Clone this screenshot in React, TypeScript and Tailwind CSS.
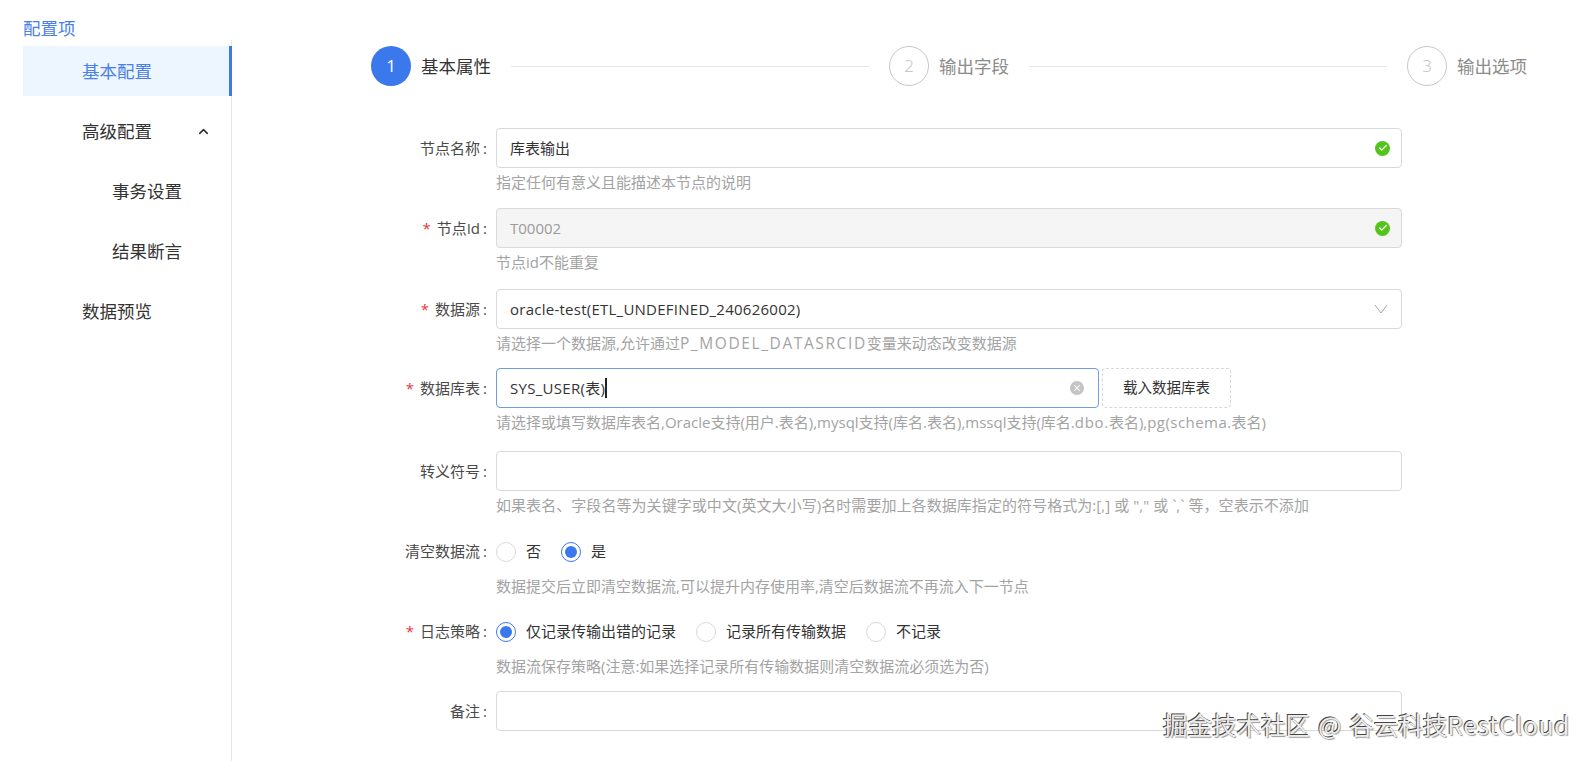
import { Check, ChevronUp, X } from 'lucide-react';

const BLUE = 'bg-[#3b78ec]';

function Step({ num, title, active }: { num: number; title: string; active?: boolean }) {
  return (
    <div className="flex h-10 shrink-0 items-center gap-2.5">
      <div
        className={
          active
            ? `flex h-10 w-10 items-center justify-center rounded-full ${BLUE} text-[17px] text-white`
            : 'flex h-10 w-10 items-center justify-center rounded-full border border-[#c8c8c8] text-[17px] font-light text-[#c0c0c0]'
        }
      >
        {num}
      </div>
      <span className={active ? 'text-[17.5px] text-[#333]' : 'text-[17.5px] text-[#8c8c8c]'}>{title}</span>
    </div>
  );
}

function SuccessIcon() {
  return (
    <span className="flex h-[15px] w-[15px] items-center justify-center rounded-full bg-[#52c41a]">
      <Check size={10} strokeWidth={3} className="text-white" />
    </span>
  );
}

function SelectArrow() {
  return (
    <svg width="14" height="10" viewBox="0 0 14 10" fill="none" className="mr-[2px] text-[#a8a8a8]">
      <path d="M1 1 L7 9 L13 1" stroke="currentColor" strokeWidth="1" />
    </svg>
  );
}

function Row({
  label,
  required,
  hint,
  height = 'h-[80.5px]',
  children,
}: {
  label: string;
  required?: boolean;
  hint: React.ReactNode;
  height?: string;
  children: React.ReactNode;
}) {
  return (
    <div className={`flex ${height}`}>
      <div className="flex h-10 w-[126px] shrink-0 items-center justify-end pr-[9px] text-[15px] text-[#4a4a4a]">
        {required && <span className="mr-[6px] text-[15px] text-[#e4393c]">*</span>}
        {label}
        <span className="ml-[3px]">:</span>
      </div>
      <div className="min-w-0 flex-1">
        {children}
        <div className="mt-[3px] text-[15px] leading-[22px] whitespace-nowrap text-[#a3a3a3]">{hint}</div>
      </div>
    </div>
  );
}

function TextBox({
  value,
  disabled,
  icon,
  wide,
}: {
  value?: string;
  disabled?: boolean;
  icon?: React.ReactNode;
  wide?: boolean;
}) {
  return (
    <div
      className={`flex h-10 items-center justify-between rounded border border-[#d9d9d9] pr-[11px] pl-[13px] text-[15px] ${
        disabled ? 'bg-[#f5f5f5] text-[#9a9a9a]' : 'bg-white text-[#333]'
      }`}
    >
      <span className={wide ? 'tracking-[0.25px]' : ''}>{value}</span>
      {icon}
    </div>
  );
}

function Radio({ label, checked }: { label: string; checked?: boolean }) {
  return (
    <label className="flex items-center gap-2.5 text-[15px] text-[#333]">
      <span
        className={`flex h-5 w-5 items-center justify-center rounded-full border ${
          checked ? 'border-[#3b78ec]' : 'border-[#d9d9d9]'
        }`}
      >
        {checked && <span className={`h-3 w-3 rounded-full ${BLUE}`} />}
      </span>
      {label}
    </label>
  );
}

export default function App() {
  return (
    <div
      className="relative flex h-[761px] w-full overflow-hidden bg-white"
      style={{ fontFamily: '"Open Sans", "Noto Sans CJK SC", sans-serif' }}
    >
      <aside className="w-[232px] shrink-0 pl-[23px]">
        <div className="flex h-10 items-center pt-[16px] text-[17.5px] text-[#4a80e8]">配置项</div>
        <nav className="h-[721px] border-r border-[#e6e6e6] pt-1.5 text-[17.5px] text-[#333]">
          <div className="-mr-px flex h-[50px] items-center border-r-[3px] border-[#3b78ec] bg-[#edf5ff] pl-[59px] text-[#4a80e8]">
            基本配置
          </div>
          <div className="mt-2.5 flex h-[50px] items-center justify-between pr-[20px] pl-[59px]">
            高级配置
            <ChevronUp size={15} strokeWidth={2.5} />
          </div>
          <div className="mt-2.5 flex h-[50px] items-center pl-[89px]">事务设置</div>
          <div className="mt-2.5 flex h-[50px] items-center pl-[89px]">结果断言</div>
          <div className="mt-2.5 flex h-[50px] items-center pl-[59px]">数据预览</div>
        </nav>
      </aside>

      <main className="min-w-0 flex-1">
        <div className="mt-[46px] ml-[139px] flex w-[1156px] items-center">
          <Step num={1} title="基本属性" active />
          <div className="mx-5 h-px flex-1 bg-[#e6e6e6]" />
          <Step num={2} title="输出字段" />
          <div className="mx-5 h-px flex-1 bg-[#e6e6e6]" />
          <Step num={3} title="输出选项" />
        </div>

        <form className="mt-[42px] ml-[138px] w-[1032px]">
          <Row label="节点名称" height="h-[80px]" hint="指定任何有意义且能描述本节点的说明">
            <TextBox value="库表输出" icon={<SuccessIcon />} />
          </Row>
          <Row label="节点Id" required height="h-[81px]" hint="节点id不能重复">
            <TextBox value="T00002" disabled icon={<SuccessIcon />} />
          </Row>
          <Row
            label="数据源"
            required
            height="h-[79px]"
            hint={
              <>
                请选择一个数据源,允许通过
                <span className="text-[15.5px] tracking-[1.6px]">P_MODEL_DATASRCID</span>
                变量来动态改变数据源
              </>
            }
          >
            <TextBox value="oracle-test(ETL_UNDEFINED_240626002)" wide icon={<SelectArrow />} />
          </Row>
          <Row
            label="数据库表"
            required
            height="h-[83px]"
            hint={
              <>
                请选择或填写数据库表名,Oracle支持(用户.表名),mysql支持(库名.表名),mssql支持(库名.
                <span className="tracking-[0.7px]">dbo.</span>
                表名),
                <span className="tracking-[0.45px]">pg(schema.</span>
                表名)
              </>
            }
          >
            <div className="flex gap-[3px]">
              <div className="flex h-10 w-[603px] items-center justify-between rounded border border-[#6f9be0] pr-[14px] pl-[13px] text-[15px] text-[#333]">
                <span className="flex items-center tracking-[0.3px]">
                  SYS_USER(表)
                  <span className="h-5 w-0.5 bg-[#222]" />
                </span>
                <span className="flex h-3.5 w-3.5 items-center justify-center rounded-full bg-[#c4c4c4]">
                  <X size={10} strokeWidth={2.5} className="text-white" />
                </span>
              </div>
              <button
                type="button"
                className="h-10 w-[129px] rounded border border-dashed border-[#d9d9d9] text-[14.5px] text-[#333]"
              >
                载入数据库表
              </button>
            </div>
          </Row>
          <Row
            label="转义符号"
            hint={
              <span className="tracking-[0.06px]">
                {'如果表名、字段名等为关键字或中文(英文大小写)名时需要加上各数据库指定的符号格式为:[,] 或 "," 或 `,` 等，空表示不添加'}
              </span>
            }
          >
            <TextBox />
          </Row>
          <Row label="清空数据流" height="h-[80px]" hint="数据提交后立即清空数据流,可以提升内存使用率,清空后数据流不再流入下一节点">
            <div className="flex h-10 items-center gap-[20px]">
              <Radio label="否" />
              <Radio label="是" checked />
            </div>
          </Row>
          <Row label="日志策略" required height="h-[79.5px]" hint="数据流保存策略(注意:如果选择记录所有传输数据则清空数据流必须选为否)">
            <div className="flex h-10 items-center gap-5">
              <Radio label="仅记录传输出错的记录" checked />
              <Radio label="记录所有传输数据" />
              <Radio label="不记录" />
            </div>
          </Row>
          <Row label="备注" hint="">
            <TextBox />
          </Row>
        </form>
      </main>

      <div
        className="absolute top-[707px] left-[1163px] text-[24.5px] whitespace-nowrap text-[#ededed] [word-spacing:2.5px] [text-shadow:-1px_-1px_0_#444,1px_1px_1px_#999]"
        style={{ fontFamily: '"Noto Sans CJK SC", sans-serif' }}
      >
        掘金技术社区 @ 谷云科技<span className="tracking-[0.7px]">RestCloud</span>
      </div>
    </div>
  );
}
